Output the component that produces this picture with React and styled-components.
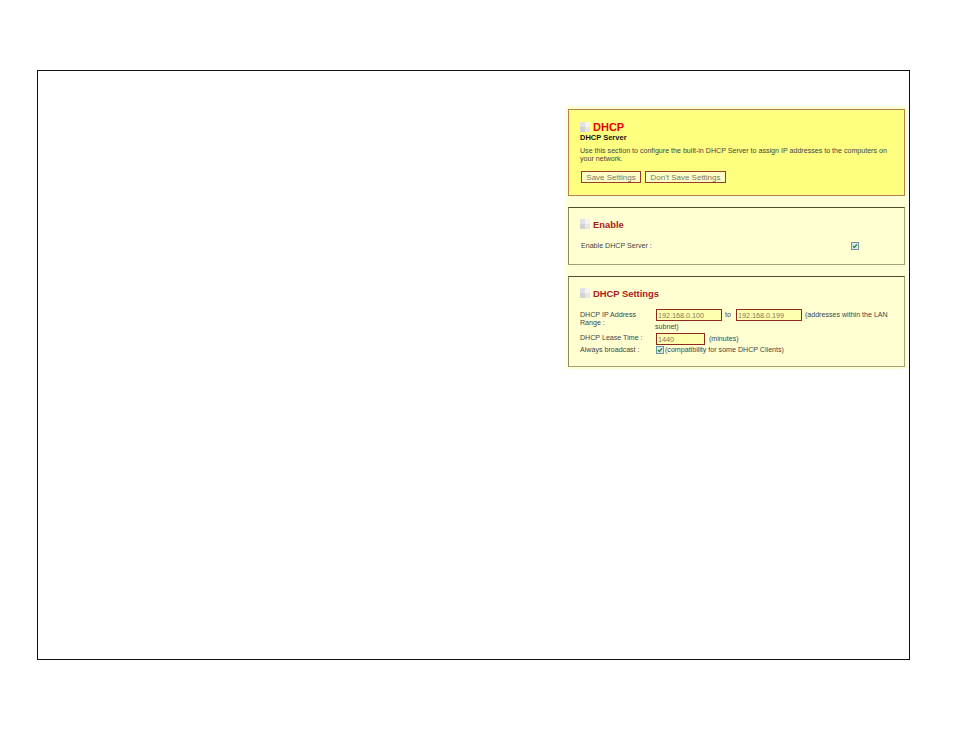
import React from "react";
import styled, { createGlobalStyle } from "styled-components";

const GlobalStyle = createGlobalStyle`
    html, body {
        margin: 0;
        padding: 0;
        background: #fff;
    }
`;

const Page = styled.div`
    width: 954px;
    height: 737px;
    padding: 70px 0 0 37px;
    box-sizing: border-box;
    font-family: "Liberation Sans", Arial, sans-serif;
    font-size: 7.1px;
    color: #444;
`;

const Frame = styled.div`
    width: 873px;
    height: 590px;
    box-sizing: border-box;
    border: 1px solid #111;
    display: flex;
    justify-content: flex-end;
    padding: 35px 2px 0 0;
`;

const Column = styled.div`
    width: 342px;
    height: 263px;
    box-sizing: border-box;
    background: #ffffd6;
    padding: 3px 2px 0 3px;
    display: flex;
    flex-direction: column;
    gap: 11px;
`;

const Panel = styled.section`
    box-sizing: border-box;
    height: ${(p) => p.$height}px;
    padding: ${(p) => (p.$main ? "11px" : "10px")} 11px 0 11px;
    background: ${(p) => (p.$main ? "#ffff80" : "#ffffd2")};
    border: 1px solid ${(p) => (p.$main ? "#b9804f" : "#a3a37a")};
    border-top-color: ${(p) => (p.$main ? "#b9804f" : "#4d4d2e")};
    border-left-color: ${(p) => (p.$main ? "#b9804f" : "#8a8a66")};
`;

const Heading = styled.div`
    display: flex;
    align-items: center;
    gap: 3px;
    height: 12px;
    font-weight: 700;
    font-size: ${(p) => (p.$main ? "11px" : "9.4px")};
    color: ${(p) => (p.$main ? "#e60000" : "#b01818")};
`;

const SquareIcon = () => (
    <svg width="10" height="10" viewBox="0 0 10 10" aria-hidden="true">
        <rect x="0" y="0" width="5" height="5" fill="#e2e2e2" />
        <rect x="5" y="0" width="5" height="5" fill="#f4f4f4" />
        <rect x="0" y="5" width="5" height="5" fill="#d2d2d2" />
        <rect x="5" y="5" width="5" height="5" fill="#e6e6e6" />
    </svg>
);

const SubHeading = styled.div`
    font-size: 7.5px;
    font-weight: 700;
    color: #111;
    line-height: 9px;
`;

const Intro = styled.p`
    margin: 5px 0 0;
    line-height: 8px;
    width: 318px;
`;

const ButtonRow = styled.div`
    display: flex;
    gap: 4px;
    margin: 8px 0 0 1px;
`;

const Button = styled.button`
    height: 12px;
    width: ${(p) => p.$width}px;
    padding: 0;
    box-sizing: border-box;
    background: #ffffc8;
    border: 1px solid #9c3a2a;
    font: 8px "Liberation Sans", Arial, sans-serif;
    color: #776;
`;

const EnableRow = styled.div`
    display: flex;
    align-items: center;
    justify-content: space-between;
    margin: 12px 0 0 1px;
    padding-right: 34px;
`;

const CheckBox = () => (
    <svg width="8" height="8" viewBox="0 0 8 8" aria-hidden="true">
        <rect x="0.5" y="0.5" width="7" height="7" fill="#dfeaea" stroke="#6f96a2" />
        <path d="M2 4l1.4 1.5L6 2.4" fill="none" stroke="#2a8a3a" strokeWidth="1.4" />
    </svg>
);

const SettingsGrid = styled.div`
    display: grid;
    grid-template-columns: 76px 1fr;
    margin-top: 10px;
    line-height: 8px;
    row-gap: 1px;
`;

const Label = styled.div`
    padding-top: ${(p) => p.$top || 0}px;
`;

const Field = styled.div`
    display: flex;
    align-items: center;
    gap: ${(p) => p.$gap || 3}px;
    flex-wrap: wrap;
    margin-top: ${(p) => p.$top || 0}px;
`;

const Joiner = styled.span`
    margin-right: 2px;
`;

const WrappedLine = styled.span`
    flex-basis: 100%;
    margin: -1px 0 -1px -1px;
    line-height: 9px;
`;

const TextInput = styled.input`
    width: ${(p) => p.$width}px;
    height: 12px;
    padding: 0 0 0 1px;
    box-sizing: border-box;
    background: #ffffb0;
    border: 1px solid #8c2a1c;
    font: 7.2px "Liberation Sans", Arial, sans-serif;
    color: #776;
    outline: none;
`;

export default function App() {
    return (
        <Page>
            <GlobalStyle />
            <Frame>
                <Column>
                    <Panel $main $height={87}>
                        <Heading $main><SquareIcon />DHCP</Heading>
                        <SubHeading>DHCP Server</SubHeading>
                        <Intro>
                            Use this section to configure the built-in DHCP Server to assign IP addresses to the computers on your network.
                        </Intro>
                        <ButtonRow>
                            <Button $width={60}>Save Settings</Button>
                            <Button $width={81}>Don't Save Settings</Button>
                        </ButtonRow>
                    </Panel>
                    <Panel $height={58}>
                        <Heading><SquareIcon />Enable</Heading>
                        <EnableRow>
                            <span>Enable DHCP Server :</span>
                            <CheckBox />
                        </EnableRow>
                    </Panel>
                    <Panel $height={91}>
                        <Heading><SquareIcon />DHCP Settings</Heading>
                        <SettingsGrid>
                            <Label $top={2}>DHCP IP Address Range :</Label>
                            <Field>
                                <TextInput readOnly value="192.168.0.100" $width={66} />
                                <Joiner>to</Joiner>
                                <TextInput readOnly value="192.168.0.199" $width={66} />
                                <span>(addresses within the LAN</span>
                                <WrappedLine>subnet)</WrappedLine>
                            </Field>
                            <Label $top={2}>DHCP Lease Time :</Label>
                            <Field $gap={4} $top={1}>
                                <TextInput readOnly value="1440" $width={49} />
                                <span>(minutes)</span>
                            </Field>
                            <Label>Always broadcast :</Label>
                            <Field $gap={1}>
                                <CheckBox />
                                <span>(compatibility for some DHCP Clients)</span>
                            </Field>
                        </SettingsGrid>
                    </Panel>
                </Column>
            </Frame>
        </Page>
    );
}
